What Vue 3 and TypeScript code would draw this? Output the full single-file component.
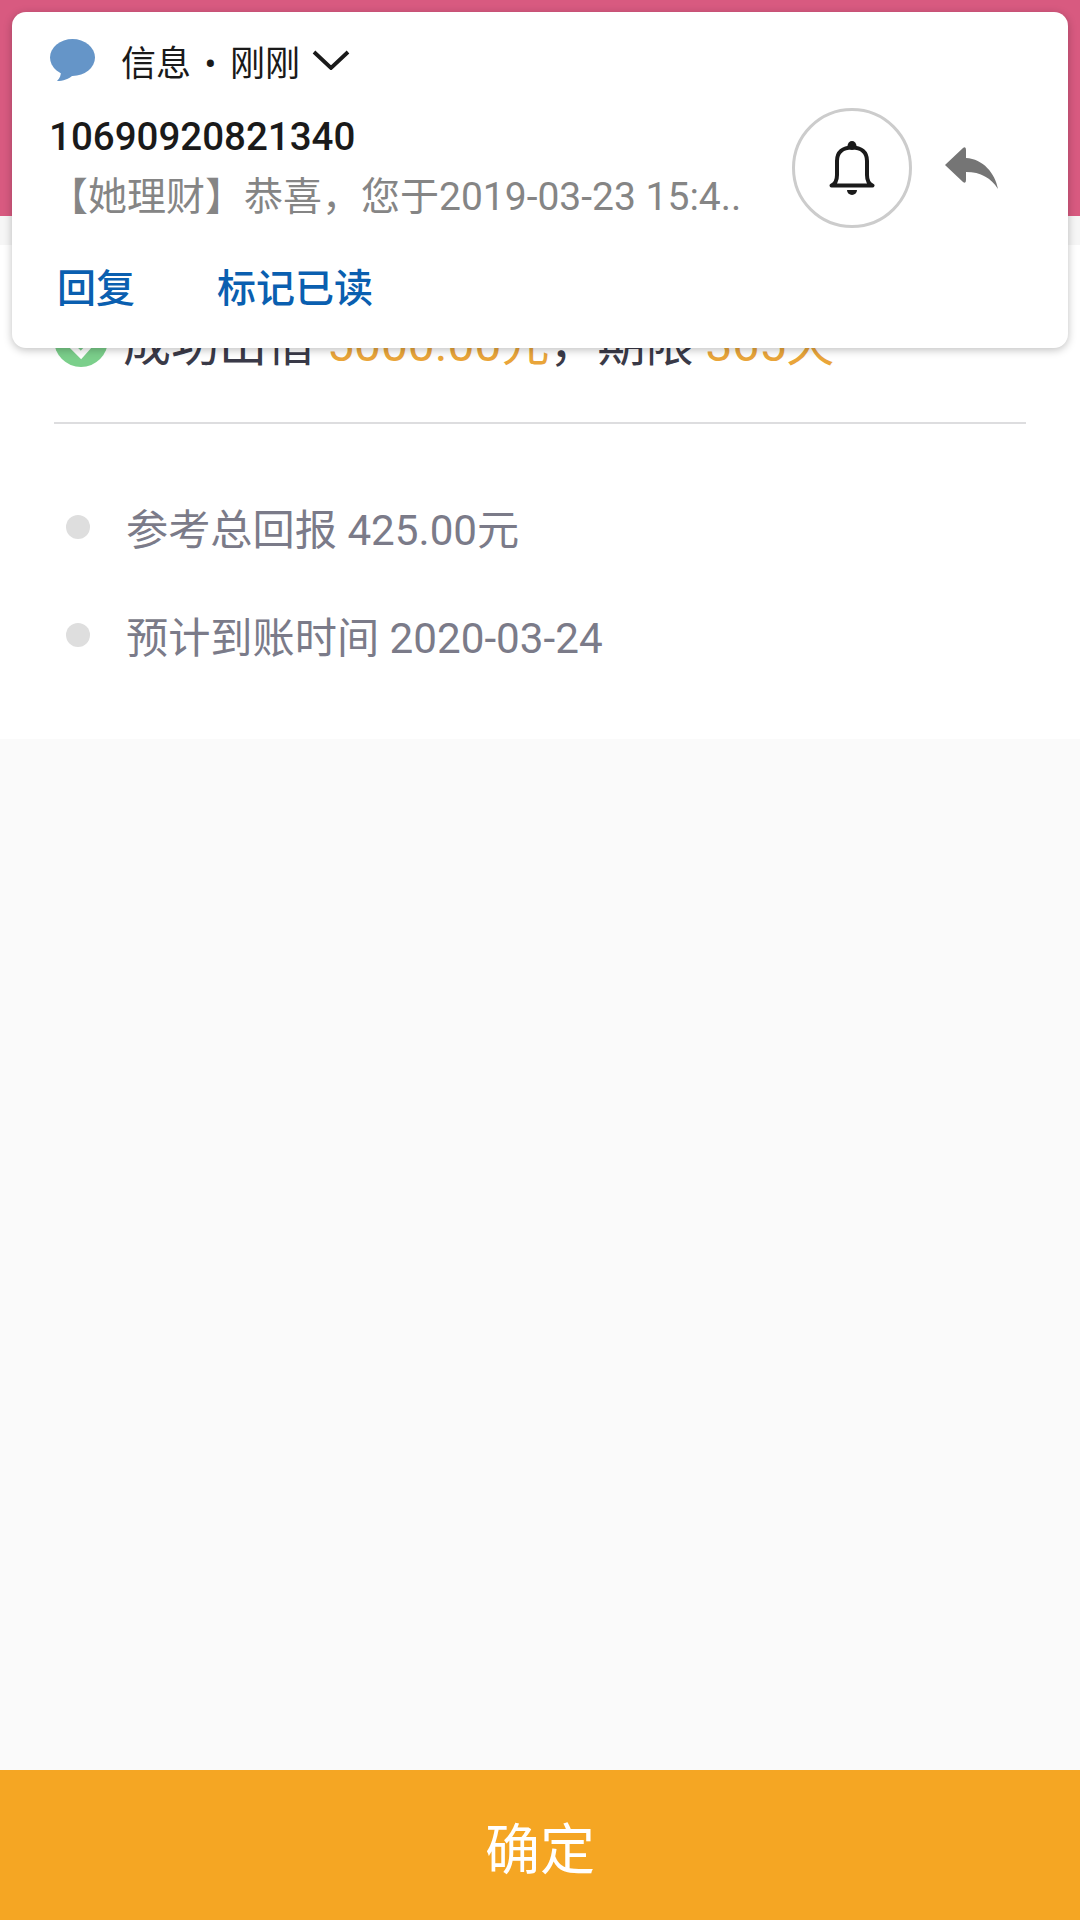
<template>
  <div class="page">
    <div class="top-bar"></div>
    <div class="top-band"></div>

    <section class="summary">
      <div class="result">
        <svg class="check" viewBox="0 0 54 54" aria-hidden="true">
          <circle cx="27" cy="27" r="27" fill="#7bcf8b" />
          <path d="M13 28l14 14 16-18" fill="none" stroke="#fff" stroke-width="6" />
        </svg>
        <span>成功出借 <em>{{ amount }}元</em>，期限 <em>{{ days }}天</em></span>
      </div>
      <div class="divider"></div>
      <ul class="facts">
        <li v-for="f in facts" :key="f"><i class="dot"></i>{{ f }}</li>
      </ul>
    </section>

    <div class="spacer"></div>
    <button class="confirm">确定</button>

    <!-- heads-up notification sits over the page -->
    <div class="notice">
      <div class="notice-head">
        <svg class="bubble" viewBox="0 0 45 42" aria-hidden="true">
          <ellipse cx="22.5" cy="18.5" rx="22.5" ry="18.5" fill="#6595c8" />
          <path d="M11 32C11 36 10 39 7 42c6 0 12-2 16-6z" fill="#6595c8" />
        </svg>
        <span class="app-name">信息<span class="sep">•</span>刚刚</span>
        <svg class="chevron" viewBox="0 0 38 20" aria-hidden="true">
          <path d="M2 2l17 16L36 2" fill="none" stroke="#1a1a1a" stroke-width="3.8" />
        </svg>
      </div>
      <div class="notice-body">
        <div class="notice-text">
          <div class="sender">10690920821340</div>
          <div class="message">【她理财】恭喜，您于2019-03-23 15:4..</div>
        </div>
        <div class="bell-ring">
          <svg class="bell" viewBox="0 0 46 54" aria-hidden="true">
            <circle cx="23" cy="4.5" r="4.4" fill="#1a1a1a" />
            <path d="M2.5 44.5C6 43 8 40 8 34V20C8 11 14 6.5 23 6.5S38 11 38 20V34C38 40 40 43 43.5 44.5Z" fill="none" stroke="#1a1a1a" stroke-width="4" stroke-linejoin="round" />
            <path d="M18 49H28A5 5 0 0 1 18 49Z" fill="#1a1a1a" />
          </svg>
        </div>
        <svg class="reply" viewBox="0 0 53 43" aria-hidden="true">
          <path d="M0 18L18 1Q21-1 21 3V11C38 12 50 26 53 42 46 31 36 25 21 25V33Q21 37 18 35Z" fill="#757575" />
        </svg>
      </div>
      <div class="notice-actions">
        <span>回复</span>
        <span>标记已读</span>
      </div>
    </div>
  </div>
</template>

<script setup lang="ts">
const amount = '5000.00'
const days = 365
const facts: string[] = ['参考总回报 425.00元', '预计到账时间 2020-03-24']
</script>

<style>
html, body { margin: 0; background: #fafafa; }
</style>

<style scoped>
.page {
  position: relative;
  display: flex;
  flex-direction: column;
  width: 1080px;
  height: 1920px;
  overflow: hidden;
  background: #fafafa;
  font-family: Roboto, "Noto Sans CJK SC", sans-serif;
}
.top-bar { height: 216px; background: #d85a80; }
.top-band { height: 29px; background: #f6f6f6; }
.summary {
  height: 494px;
  box-sizing: border-box;
  padding: 68px 54px 0;
  background: #fff;
}
.result {
  display: flex;
  align-items: center;
  gap: 15px;
  height: 54px;
  font-size: 48px;
  color: #3a3a48;
  white-space: nowrap;
}
.result em { font-style: normal; color: #e9a53a; }
.check { width: 54px; height: 54px; flex: none; }
.divider { height: 2px; margin-top: 55px; background: #dddddf; }
.facts { list-style: none; margin: 0; padding: 48px 0 0; }
.facts li {
  display: flex;
  align-items: center;
  height: 108px;
  font-size: 42.2px;
  color: #7b7b89;
}
.dot {
  width: 24px;
  height: 24px;
  margin: 2px 36px 0 12px;
  border-radius: 50%;
  background: #dedede;
}
.spacer { flex: 1; }
.confirm {
  height: 150px;
  border: none;
  padding: 0;
  background: #f5a623;
  color: #fff;
  font: inherit;
  font-size: 55px;
}
.notice {
  position: absolute;
  top: 12px;
  left: 12px;
  width: 1056px;
  height: 336px;
  box-sizing: border-box;
  padding: 27px 37px 0;
  border-radius: 14px;
  background: #fff;
  box-shadow: 0 2px 8px rgba(0, 0, 0, 0.25);
}
.notice-head { display: flex; align-items: center; height: 42px; }
.bubble { width: 45px; height: 42px; flex: none; margin-left: 1px; }
.app-name { margin-left: 26px; font-size: 35px; color: #1a1a1a; white-space: nowrap; }
.sep { display: inline-block; width: 39px; text-align: center; }
.chevron { width: 38px; height: 20px; margin-left: 12px; }
.notice-body { display: flex; align-items: flex-start; }
.notice-text { width: 743px; flex: none; padding-top: 34px; }
.sender { font-size: 38.5px; font-weight: 500; line-height: 44px; color: #1a1a1a; }
.message { margin-top: 13px; font-size: 39px; line-height: 50px; color: #858585; white-space: nowrap; }
.bell-ring {
  display: flex;
  align-items: center;
  justify-content: center;
  box-sizing: border-box;
  width: 120px;
  height: 120px;
  margin-top: 27px;
  border: 3px solid #cccccc;
  border-radius: 50%;
}
.bell { width: 46px; height: 54px; }
.reply { width: 53px; height: 43px; margin: 66px 0 0 33px; }
.notice-actions {
  display: flex;
  gap: 82px;
  padding: 36px 0 0 8px;
  font-size: 39px;
  font-weight: 500;
  line-height: 50px;
  color: #0a5fb0;
}
</style>
